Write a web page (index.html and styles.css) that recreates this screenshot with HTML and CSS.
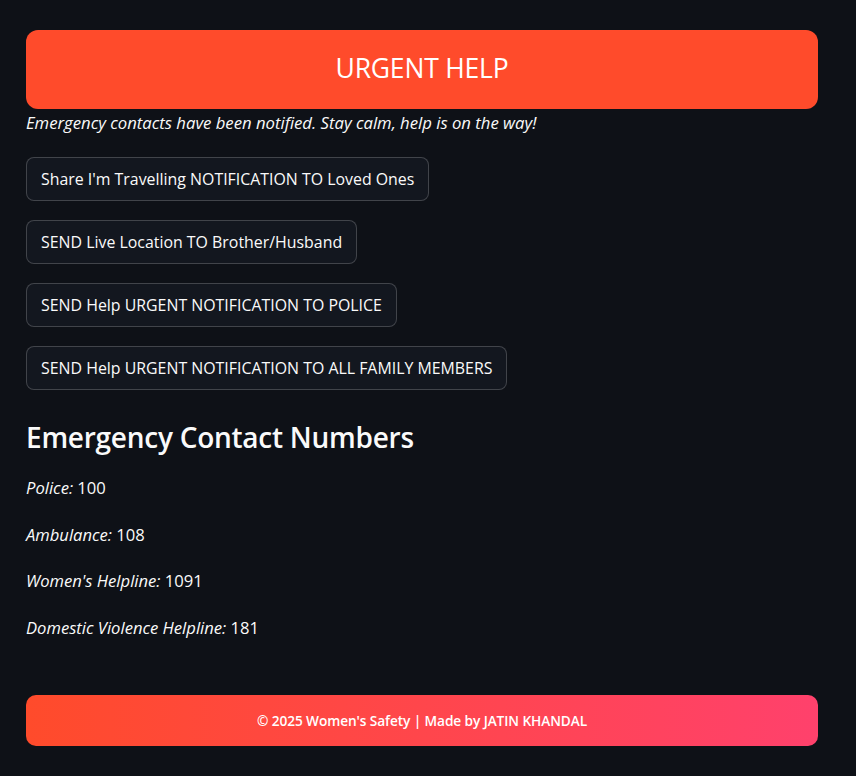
FILE: index.html
```html
<!DOCTYPE html>
<html>
<head>
<meta charset="utf-8">
<link rel="stylesheet" href="styles.css">
</head>
<body>
<main class="app">
  <button class="urgent">URGENT HELP</button>
  <p class="notice">Emergency contacts have been notified. Stay calm, help is on the way!</p>
  <div class="actions">
    <button class="btn">Share I'm Travelling NOTIFICATION TO Loved Ones</button>
    <button class="btn">SEND Live Location TO Brother/Husband</button>
    <button class="btn">SEND Help URGENT NOTIFICATION TO POLICE</button>
    <button class="btn">SEND Help URGENT NOTIFICATION TO ALL FAMILY MEMBERS</button>
  </div>
  <h3 class="heading">Emergency Contact Numbers</h3>
  <div class="contacts">
    <p><em>Police:</em> 100</p>
    <p><em>Ambulance:</em> 108</p>
    <p><em>Women's Helpline:</em> 1091</p>
    <p><em>Domestic Violence Helpline:</em> 181</p>
  </div>
  <footer class="footer">© 2025 Women's Safety | Made by JATIN KHANDAL</footer>
</main>
</body>
</html>
```
FILE: styles.css
```css
html, body {
  margin: 0;
  padding: 0;
  background: #0e1117;
  color: #fafafa;
  font-family: "Open Sans", Lato, sans-serif;
}
.app {
  width: 792px;
  padding: 30px 0 0 26px;
  display: flex;
  flex-direction: column;
  align-items: flex-start;
}
.urgent {
  width: 792px;
  height: 79px;
  border: none;
  border-radius: 12px;
  background: #ff4b2b;
  color: #fff;
  font-family: inherit;
  font-size: 26.5px;
  letter-spacing: -0.2px;
  padding: 0 0 3px;
}
.notice {
  margin: 3px 0 0;
  font-style: italic;
  font-size: 16.7px;
  line-height: 22px;
}
.actions {
  margin-top: 23px;
  display: flex;
  flex-direction: column;
  align-items: flex-start;
  gap: 19px;
}
.btn {
  height: 44px;
  padding: 0 14px;
  background: #13171f;
  border: 1px solid rgba(250, 250, 250, 0.2);
  border-radius: 8px;
  color: #fafafa;
  font-family: inherit;
  font-size: 15.9px;
}
.heading {
  margin: 29px 0 0;
  font-size: 28px;
  font-weight: 600;
  line-height: 36px;
  letter-spacing: -0.25px;
}
.contacts {
  margin-top: 22px;
  display: flex;
  flex-direction: column;
  gap: 24.6px;
}
.contacts p {
  margin: 0;
  font-size: 16.6px;
  line-height: 22px;
}
.footer {
  margin-top: 56px;
  width: 792px;
  height: 51px;
  border-radius: 10px;
  background: linear-gradient(90deg, #ff4b2b, #ff416c);
  color: #fff;
  font-size: 13.7px;
  font-weight: 600;
  letter-spacing: -0.1px;
  display: flex;
  align-items: center;
  justify-content: center;
}
```
